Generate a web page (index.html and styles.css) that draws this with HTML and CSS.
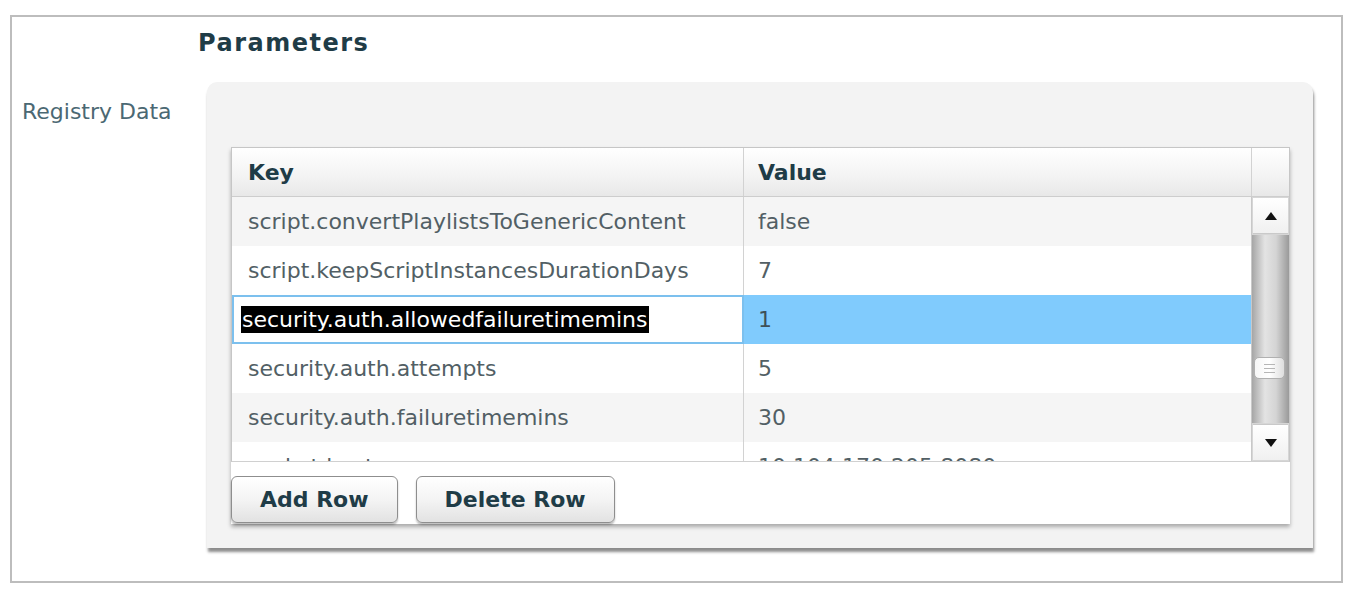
FILE: index.html
```html
<!DOCTYPE html>
<html>
    <head>
        <meta charset="UTF-8">
        <title>Parameters</title>
        <link rel="stylesheet" href="styles.css">
    </head>
    <body>
        <div class="form">
            <div></div>
            <h2 class="section-title">Parameters</h2>

            <div class="field-label">Registry Data</div>
            <div class="panel">
                <div class="grid-wrap">
                    <div class="grid">
                        <div class="grid-head">
                            <div class="cell key">Key</div>
                            <div class="cell value">Value</div>
                            <div class="corner"></div>
                        </div>
                        <div class="grid-body">
                            <div class="rows">
                                <div class="row alt">
                                    <div class="cell key">script.convertPlaylistsToGenericContent</div>
                                    <div class="cell value">false</div>
                                </div>
                                <div class="row">
                                    <div class="cell key">script.keepScriptInstancesDurationDays</div>
                                    <div class="cell value">7</div>
                                </div>
                                <div class="row selected">
                                    <div class="cell key editing"><span class="sel">security.auth.allowedfailuretimemins</span></div>
                                    <div class="cell value">1</div>
                                </div>
                                <div class="row">
                                    <div class="cell key">security.auth.attempts</div>
                                    <div class="cell value">5</div>
                                </div>
                                <div class="row alt">
                                    <div class="cell key">security.auth.failuretimemins</div>
                                    <div class="cell value">30</div>
                                </div>
                                <div class="row">
                                    <div class="cell key">socket.host</div>
                                    <div class="cell value">10.104.170.205:8080</div>
                                </div>
                            </div>
                            <div class="scrollbar">
                                <div class="scroll-btn">
                                    <svg width="12" height="8" viewBox="0 0 12 8"><polygon points="6,0 12,8 0,8" fill="#111"/></svg>
                                </div>
                                <div class="scroll-track">
                                    <div class="scroll-thumb">
                                        <i></i><i></i><i></i>
                                    </div>
                                </div>
                                <div class="scroll-btn">
                                    <svg width="12" height="8" viewBox="0 0 12 8"><polygon points="0,0 12,0 6,8" fill="#111"/></svg>
                                </div>
                            </div>
                        </div>
                    </div>
                    <div class="grid-actions">
                        <button>Add Row</button>
                        <button>Delete Row</button>
                    </div>
                </div>
            </div>
        </div>
    </body>
</html>
```

FILE: styles.css
```css
body {
    margin: 0;
    background-color: #ffffff;
    font-family: "DejaVu Sans", Verdana, sans-serif;
}

.form {
    display: grid;
    grid-template-columns: 186px 1fr;
    align-content: start;
    margin: 15px 17px 0 10px;
    height: 568px;
    box-sizing: border-box;
    border: 2px solid #bdbdbd;
    padding: 11px 28px 0 0;
}

.section-title {
    margin: 0;
    font-size: 24px;
    line-height: 30px;
    letter-spacing: 1.5px;
    font-weight: bold;
    color: #1f3c47;
}

.field-label {
    padding: 41px 0 0 10px;
    font-size: 22px;
    color: #4b6873;
}

.panel {
    margin: 24px 0 0 9px;
    height: 466px;
    box-sizing: border-box;
    padding: 65px 23px 0 24px;
    background-color: #f3f3f3;
    border-radius: 10px 10px 0 0;
    box-shadow: 1px 4px 3px rgba(0, 0, 0, 0.45);
}

.grid-wrap {
    background-color: #ffffff;
    box-shadow: 0 3px 4px rgba(0, 0, 0, 0.3);
}

.grid {
    border: 1px solid #c6c6c6;
    border-bottom-color: #d0d0d0;
}

.grid-head {
    display: flex;
    height: 48px;
    background: linear-gradient(#ffffff, #f3f3f3 60%, #e8e8e8);
    border-bottom: 1px solid #cdcdcd;
}

.cell {
    box-sizing: border-box;
    display: flex;
    align-items: center;
    font-size: 22px;
    color: #525f65;
    white-space: nowrap;
    overflow: hidden;
}

.cell.key {
    width: 512px;
    padding-left: 16px;
    border-right: 1px solid #d2d2d2;
}

.cell.value {
    flex: 1;
    padding-left: 14px;
}

.grid-head .cell {
    font-weight: bold;
    color: #1f3c47;
}

.corner {
    width: 37px;
    border-left: 1px solid #d2d2d2;
}

.grid-body {
    display: flex;
    height: 264px;
}

.rows {
    flex: 1;
    overflow: hidden;
}

.row {
    display: flex;
    height: 49px;
    background-color: #ffffff;
}

.row.alt {
    background-color: #f5f5f5;
}

.row.selected .cell.value {
    background-color: #80cbfd;
    color: #3e5058;
}

.cell.editing {
    padding-left: 7px;
    border: 2px solid #7cc0ee;
    background-color: #ffffff;
}

.sel {
    background-color: #000000;
    color: #ffffff;
    padding: 1px 1px;
}

.scrollbar {
    width: 37px;
    display: flex;
    flex-direction: column;
    border-left: 1px solid #c8c8c8;
    background-color: #d6d6d6;
}

.scroll-btn {
    height: 35px;
    margin: 1px;
    display: flex;
    align-items: center;
    justify-content: center;
    background: linear-gradient(#ffffff, #f0f0f0);
    border-bottom: 1px solid #c9c9c9;
}

.scroll-btn:last-child {
    border-top: 1px solid #c9c9c9;
    border-bottom: none;
}

.scroll-track {
    flex: 1;
    background: linear-gradient(to right, #a6a6a6, #e3e3e3 35%, #d4d4d4 65%, #9a9a9a);
}

.scroll-thumb {
    margin: 122px 4px 0 2px;
    height: 22px;
    border: 1px solid #b0b0b0;
    border-radius: 5px;
    background: linear-gradient(to right, #f6f6f6, #ffffff 50%, #dedede);
    display: flex;
    flex-direction: column;
    justify-content: center;
    gap: 3px;
    padding: 0 9px;
    box-sizing: border-box;
}

.scroll-thumb i {
    display: block;
    height: 1px;
    background-color: #b6b6b6;
}

.grid-actions {
    display: flex;
    gap: 18px;
    height: 62px;
    box-sizing: border-box;
    padding-top: 14px;
}

button {
    height: 47px;
    padding: 0 28px;
    font-family: "DejaVu Sans", Verdana, sans-serif;
    font-size: 22px;
    font-weight: bold;
    color: #1f3c47;
    background: linear-gradient(#ffffff, #f4f4f4 50%, #e2e2e2);
    border: 1px solid #8e8e8e;
    border-radius: 6px;
    box-shadow: 0 2px 2px rgba(0, 0, 0, 0.25);
    cursor: pointer;
}
```
